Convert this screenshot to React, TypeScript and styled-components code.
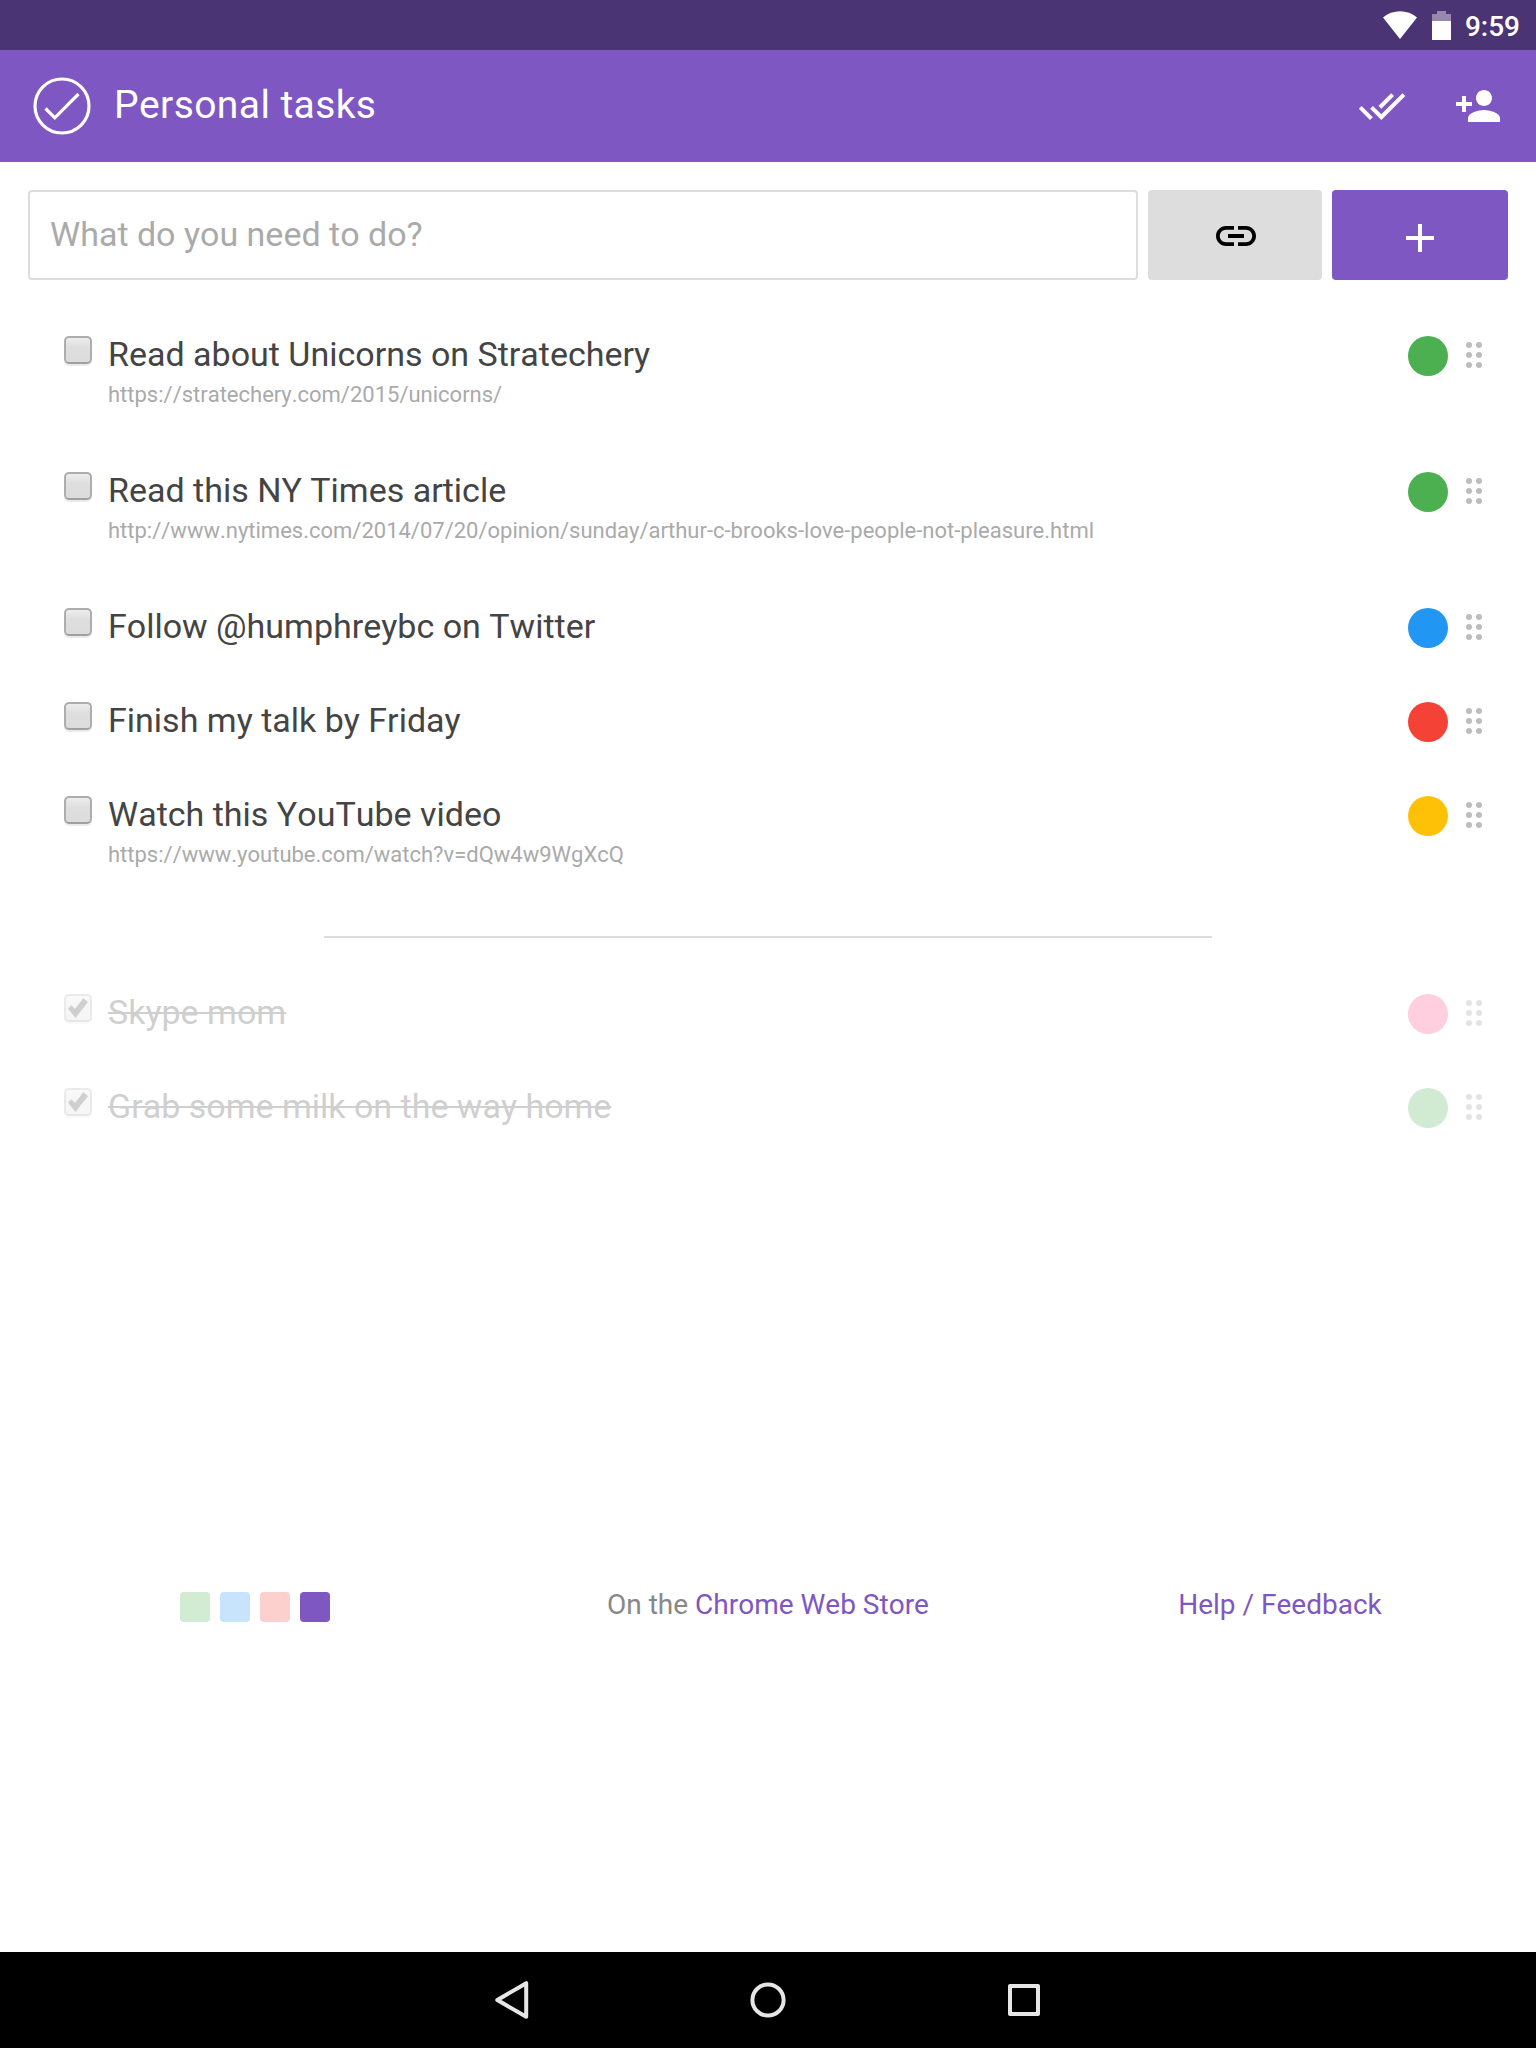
import React from 'react';
import styled, { createGlobalStyle, css } from 'styled-components';

const Global = createGlobalStyle`
  * { box-sizing: border-box; }
  body { margin: 0; background: #fff; font-family: Roboto, sans-serif; font-kerning: none; }
  a { color: #7e57c2; text-decoration: none; }
  svg { display: block; flex: none; }
`;

const Screen = styled.div`
  width: 1536px;
  height: 2048px;
  display: flex;
  flex-direction: column;
  overflow: hidden;
  background: #fff;
`;

const StatusBar = styled.div`
  height: 50px;
  flex: none;
  display: flex;
  align-items: center;
  justify-content: flex-end;
  padding-right: 16px;
  background: #4b3473;
  color: #fff;
`;

const BatteryIcon = styled.svg`
  margin-left: 14px;
`;

const Clock = styled.span`
  margin-left: 14px;
  font-size: 28px;
  font-weight: 500;
  line-height: 50px;
  padding-top: 3px;
`;

const Header = styled.header`
  height: 112px;
  flex: none;
  display: flex;
  align-items: center;
  padding: 0 34px 0 33px;
  background: #7e57c2;
  color: #fff;
`;

const Title = styled.h1`
  flex: 1;
  margin: 0 0 0 23px;
  font-size: 39px;
  font-weight: 400;
  line-height: 48px;
  letter-spacing: 0.4px;
  padding-bottom: 2px;
`;

const HeaderActions = styled.div`
  display: flex;
  gap: 48px;
`;

const EntryRow = styled.div`
  display: flex;
  gap: 10px;
  height: 90px;
  flex: none;
  margin: 28px 28px 0;
`;

const EntryField = styled.input`
  width: 1110px;
  border: 2px solid #ddd;
  border-radius: 4px;
  padding: 0 20px 2px;
  background: #fff;
  font: 400 34px Roboto, sans-serif;
  font-kerning: none;
  color: #444;
  outline: none;
  &::placeholder { color: #aaa; opacity: 1; }
`;

const EntryButton = styled.button<{ $primary?: boolean }>`
  width: ${p => (p.$primary ? 176 : 174)}px;
  display: flex;
  align-items: center;
  justify-content: center;
  border: 0;
  border-radius: 4px;
  padding: ${p => (p.$primary ? '6px 0 0' : '2px 0 0 2px')};
  background: ${p => (p.$primary ? '#7e57c2' : '#ddd')};
  color: ${p => (p.$primary ? '#fff' : '#000')};
`;

const List = styled.ul`
  list-style: none;
  margin: 0;
  padding: 47px 54px 0 64px;
`;

const Row = styled.li<{ $tall?: boolean; $done?: boolean }>`
  display: flex;
  align-items: flex-start;
  height: ${p => (p.$tall ? 136 : 94)}px;
  opacity: ${p => (p.$done ? 0.25 : 1)};
`;

const Check = styled.span`
  width: 28px;
  height: 28px;
  flex: none;
  margin-top: 9px;
  border: 2px solid #adadad;
  border-bottom-color: #a0a0a0;
  border-radius: 5px;
  background: linear-gradient(#ededed, #dedede 38%, #dcdcdc);
  box-shadow: 0 2px 0 rgba(0, 0, 0, 0.08);
`;

const Body = styled.div`
  flex: 1;
  margin-left: 16px;
`;

const Name = styled.div<{ $done?: boolean }>`
  width: fit-content;
  font-size: 34px;
  line-height: 54px;
  color: #444;
  ${p => p.$done && css`text-decoration: line-through; text-decoration-thickness: 2px;`}
`;

const Link = styled.a`
  display: block;
  margin-top: 1px;
  font-size: 22px;
  line-height: 26px;
  color: #aaa;
`;

const Dot = styled.span<{ $color: string }>`
  width: 40px;
  height: 40px;
  flex: none;
  margin: 9px 18px 0 0;
  border-radius: 50%;
  background: ${p => p.$color};
`;

const Grip = styled.span<{ $done?: boolean }>`
  display: grid;
  grid-template-columns: 6px 6px;
  gap: 4px;
  margin: 15px 0 0;
  i {
    width: 6px;
    height: 6px;
    border-radius: 50%;
    background: ${p => (p.$done ? '#949494' : '#bdbdbd')};
  }
`;

const Divider = styled.hr`
  flex: none;
  width: 888px;
  height: 2px;
  margin: 13px auto 0;
  border: 0;
  background: #ddd;
`;

const Footer = styled.footer`
  display: grid;
  grid-template-columns: repeat(3, 512px);
  justify-items: center;
  align-items: start;
  margin-top: auto;
  height: 366px;
  font-size: 28px;
  line-height: 38px;
  color: #888;
`;

const Swatches = styled.div`
  display: flex;
  gap: 10px;
  padding: 6px 2px 0 0;
`;

const Swatch = styled.span<{ $color: string }>`
  width: 30px;
  height: 30px;
  border-radius: 4px;
  background: ${p => p.$color};
`;

const NavBar = styled.nav`
  height: 96px;
  flex: none;
  display: flex;
  align-items: center;
  justify-content: center;
  gap: 208px;
  background: #000;
`;

type Task = { name: string; url?: string; color: string };

const active: Task[] = [
  { name: 'Read about Unicorns on Stratechery', url: 'https://stratechery.com/2015/unicorns/', color: '#4caf50' },
  { name: 'Read this NY Times article', url: 'http://www.nytimes.com/2014/07/20/opinion/sunday/arthur-c-brooks-love-people-not-pleasure.html', color: '#4caf50' },
  { name: 'Follow @humphreybc on Twitter', color: '#2196f3' },
  { name: 'Finish my talk by Friday', color: '#f44336' },
  { name: 'Watch this YouTube video', url: 'https://www.youtube.com/watch?v=dQw4w9WgXcQ', color: '#ffc107' },
];

const done: Task[] = [
  { name: 'Skype mom', color: '#ff4081' },
  { name: 'Grab some milk on the way home', color: '#4caf50' },
];

const Tick = () => (
  <svg width="24" height="24" viewBox="0 0 24 24">
    <path d="M2 12.700L5.300 9.300L9 13L17.300 2.300L22 5.900L9.500 22z" fill="#444" />
  </svg>
);

const TaskRow = ({ task, isDone }: { task: Task; isDone?: boolean }) => (
  <Row $tall={!!task.url} $done={isDone}>
    <Check>{isDone && <Tick />}</Check>
    <Body>
      <Name $done={isDone}>{task.name}</Name>
      {task.url && <Link>{task.url}</Link>}
    </Body>
    <Dot $color={task.color} />
    <Grip $done={isDone}><i /><i /><i /><i /><i /><i /></Grip>
  </Row>
);

export default function App() {
  return (
    <>
      <Global />
      <Screen>
        <StatusBar>
          <svg width="36" height="30" viewBox="0 0 36 30">
            <path d="M1 7.500C10.500-.8 25.500-.8 35 7.500L18 29z" fill="#fff" />
          </svg>
          <BatteryIcon width="19" height="30" viewBox="0 0 19 30">
            <path d="M0 4h5V1h9v3h5v7H0z" fill="#fff" opacity=".42" />
            <path d="M0 11h19v19H0z" fill="#fff" />
          </BatteryIcon>
          <Clock>9:59</Clock>
        </StatusBar>
        <Header>
          <svg width="58" height="58" viewBox="0 0 58 58" fill="none" stroke="#fff" strokeWidth="3.200">
            <circle cx="29" cy="29" r="27" />
            <path d="M12.500 31.500L21.800 40.800L45.500 17" />
          </svg>
          <Title>Personal tasks</Title>
          <HeaderActions>
            <svg width="48" height="48" viewBox="0 0 24 24" fill="#fff">
              <path d="M18 7l-1.410-1.410-6.340 6.340 1.410 1.410L18 7zm4.240-1.410L11.660 16.170 7.480 12l-1.410 1.410L11.660 19l12-12-1.420-1.410zM.41 13.410L6 19l1.410-1.410L1.830 12 .41 13.410z" />
            </svg>
            <svg width="48" height="48" viewBox="0 0 24 24" fill="#fff">
              <path d="M15 12c2.210 0 4-1.790 4-4s-1.790-4-4-4-4 1.790-4 4 1.790 4 4 4zm-9-2V7H4v3H1v2h3v3h2v-3h3v-2H6zm9 4c-2.670 0-8 1.340-8 4v2h16v-2c0-2.660-5.330-4-8-4z" />
            </svg>
          </HeaderActions>
        </Header>
        <EntryRow>
          <EntryField placeholder="What do you need to do?" />
          <EntryButton aria-label="Link">
            <svg width="48" height="48" viewBox="0 0 24 24" fill="#000">
              <path d="M3.900 12c0-1.710 1.390-3.100 3.100-3.100h4V7H7c-2.760 0-5 2.240-5 5s2.240 5 5 5h4v-1.900H7c-1.710 0-3.100-1.390-3.100-3.100zM8 13h8v-2H8v2zm9-6h-4v1.900h4c1.710 0 3.100 1.390 3.100 3.100s-1.390 3.100-3.100 3.100h-4V17h4c2.760 0 5-2.240 5-5s-2.240-5-5-5z" />
            </svg>
          </EntryButton>
          <EntryButton $primary aria-label="Add">
            <svg width="48" height="48" viewBox="0 0 24 24" fill="#fff">
              <path d="M19 13h-6v6h-2v-6H5v-2h6V5h2v6h6v2z" />
            </svg>
          </EntryButton>
        </EntryRow>
        <List>{active.map(t => <TaskRow key={t.name} task={t} />)}</List>
        <Divider />
        <List>{done.map(t => <TaskRow key={t.name} task={t} isDone />)}</List>
        <Footer>
          <Swatches>
            <Swatch $color="#d2ebd3" />
            <Swatch $color="#c7e4fc" />
            <Swatch $color="#fcd0cd" />
            <Swatch $color="#7e57c2" />
          </Swatches>
          <span>On the <a>Chrome Web Store</a></span>
          <a>Help / Feedback</a>
        </Footer>
        <NavBar>
          <svg width="48" height="48" viewBox="0 0 48 48" fill="none" stroke="#e6e6e6" strokeWidth="4" strokeLinejoin="round">
            <path d="M9.300 24L38.200 7.200V40.800z" />
          </svg>
          <svg width="48" height="48" viewBox="0 0 48 48" fill="none" stroke="#e6e6e6" strokeWidth="4">
            <circle cx="24" cy="24" r="15.600" />
          </svg>
          <svg width="48" height="48" viewBox="0 0 48 48" fill="none" stroke="#e6e6e6" strokeWidth="4" strokeLinejoin="round">
            <path d="M10 10H38V38H10z" />
          </svg>
        </NavBar>
      </Screen>
    </>
  );
}
